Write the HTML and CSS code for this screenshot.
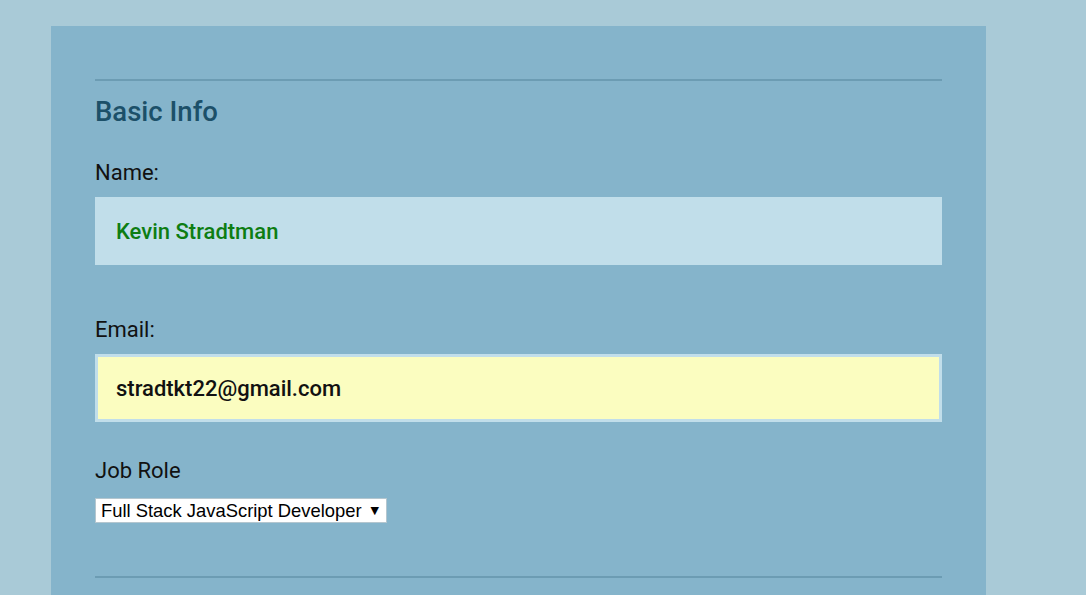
FILE: index.html
```html
<!DOCTYPE html>
<html lang="en">
<head>
<meta charset="utf-8">
<title>Registration</title>
<link rel="stylesheet" href="styles.css">
</head>
<body>
<div class="container">
  <form class="form">
    <fieldset class="section">
      <legend class="section-title">Basic Info</legend>
      <label class="label" for="name">Name:</label>
      <input class="field field-name" id="name" type="text" value="Kevin Stradtman">
      <label class="label label-email" for="mail">Email:</label>
      <input class="field field-email" id="mail" type="email" value="stradtkt22@gmail.com">
      <label class="label label-job" for="title">Job Role</label>
      <div class="select-box">
        <select class="select" id="title">
          <option>Full Stack JavaScript Developer</option>
        </select>
        <span class="select-arrow">▼</span>
      </div>
    </fieldset>
    <fieldset class="section section-next"></fieldset>
  </form>
</div>
</body>
</html>
```

FILE: styles.css
```css
html, body {
  margin: 0;
  padding: 0;
}
body {
  background: #a9cad7;
  font-family: Roboto, "Open Sans", sans-serif;
  height: 595px;
  overflow: hidden;
}
.container {
  margin: 26px 0 0 51px;
  width: 935px;
  min-height: 600px;
  background: #85b4cb;
  padding: 53px 44px 0;
  box-sizing: border-box;
}
.form {
  margin: 0;
}
.section {
  margin: 0;
  padding: 0;
  border: 0;
  border-top: 2px solid #6c9cb3;
  min-width: 0;
}
.section-title {
  float: left;
  width: 100%;
  padding: 0;
  margin: 14px 0 0;
  font-size: 27.5px;
  line-height: 34px;
  font-weight: 500;
  color: #1c5069;
}
.label {
  display: block;
  clear: both;
  font-size: 22px;
  line-height: 24px;
  color: #111;
  padding-top: 32px;
  margin-bottom: 12px;
}
.field {
  display: block;
  width: 100%;
  box-sizing: border-box;
  height: 68px;
  margin: 0;
  padding: 0 0 0 18px;
  border: 3px solid #c1deea;
  outline: none;
  font-family: Roboto, sans-serif;
  font-size: 22px;
  font-weight: 500;
}
.field-name {
  background: #c1deea;
  color: #0d7d13;
}
.field-email {
  background: #fbfdc0;
  color: #111;
}
.label-email {
  padding-top: 53px;
}
.label-job {
  padding-top: 37px;
  margin-bottom: 15px;
}
.select-box {
  display: inline-flex;
  align-items: center;
  width: 292px;
  height: 25px;
  box-sizing: border-box;
  background: #fff;
  border: 1px solid #b4c6cf;
  margin-bottom: 53px;
}
.select {
  appearance: none;
  -webkit-appearance: none;
  border: 0;
  background: transparent;
  font-family: "Liberation Sans", Arial, sans-serif;
  font-size: 18.4px;
  color: #000;
  padding: 0 0 0 5px;
  margin: 0;
  flex: 1;
  outline: none;
}
.select-arrow {
  font-family: "DejaVu Sans", sans-serif;
  font-size: 11px;
  color: #000;
  padding-right: 7px;
}
.section-next {
  height: 40px;
}
```
